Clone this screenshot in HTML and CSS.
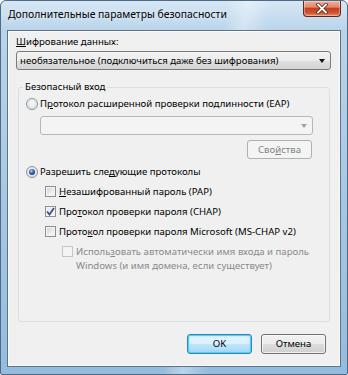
FILE: index.html
```html
<!DOCTYPE html>
<html lang="ru">
<head>
<meta charset="utf-8">
<link rel="stylesheet" href="styles.css">
</head>
<body>
<div class="window">
  <div class="titlebar">
    <div class="title">Дополнительные параметры безопасности</div>
    <div class="close">
      <svg width="14" height="11" viewBox="0 0 14 11"><path d="M3 1.5 L11 9.5 M11 1.5 L3 9.5" stroke="#5a2418" stroke-width="3.4" stroke-linecap="square"/><path d="M3 1.5 L11 9.5 M11 1.5 L3 9.5" stroke="#ffffff" stroke-width="1.8" stroke-linecap="square"/></svg>
    </div>
  </div>
  <div class="client">
    <div class="label"><u>Ш</u>ифрование данных:</div>
    <div class="combo">
      <span>необязательное (подключиться даже без шифрования)</span>
      <span class="arrow"></span>
    </div>
    <fieldset class="group">
      <legend>Безопасный вход</legend>
      <div class="row"><span class="radio"></span><span>П<u>р</u>отокол расширенной проверки подлинности (EAP)</span></div>
      <div class="combo disabled indent"><span></span><span class="arrow"></span></div>
      <div class="propsrow"><div class="btn disabled">Сво<u>й</u>ства</div></div>
      <div class="row gap"><span class="radio checked"></span><span>Разрешить сле<u>д</u>ующие протоколы</span></div>
      <div class="row sub"><span class="check"></span><span><u>Н</u>езашифрованный пароль (PAP)</span></div>
      <div class="row sub"><span class="check checked"><svg width="9" height="9" viewBox="0 0 9 9"><path d="M1 4.5 L3.5 7.5 L8 1" fill="none" stroke="#3b4f91" stroke-width="1.8"/></svg></span><span>Про<u>т</u>окол проверки пароля (CHAP)</span></div>
      <div class="row sub"><span class="check"></span><span>Прото<u>к</u>ол проверки пароля Microsoft (MS-CHAP v2)</span></div>
      <div class="row subsub dis"><span class="check disabled"></span><span>Исполь<u>з</u>овать автоматически имя входа и пароль<br>Windows (и имя домена, если существует)</span></div>
    </fieldset>
    <div class="buttons">
      <div class="btn default">OK</div>
      <div class="btn">Отмена</div>
    </div>
  </div>
</div>
</body>
</html>
```
FILE: styles.css
```css
* { box-sizing: border-box; }
html, body { margin: 0; padding: 0; }
body {
  width: 348px; height: 375px; overflow: hidden;
  font-family: "Noto Sans", "Open Sans", sans-serif;
  font-size: 9.6px; line-height: 14px; color: #000;
  background: #fff;
  white-space: nowrap;
}
.window {
  width: 348px; height: 375px;
  display: flex; flex-direction: column;
  padding: 0 6px 7px 6px;
  border: 1px solid #4d6b85;
  border-radius: 6px 6px 2px 2px;
  background:
    linear-gradient(100deg, rgba(255,255,255,0) 0%, rgba(255,255,255,0) 55%, rgba(255,255,255,0.35) 60%, rgba(255,255,255,0) 66%, rgba(255,255,255,0) 100%),
    linear-gradient(180deg, #d6e7f5 0%, #b9d4ea 8%, #a4c6e3 60%, #94bcdf 100%);
}
.titlebar {
  height: 29px; flex: none;
  display: flex; align-items: flex-start;
}
.title {
  margin: 5px 0 0 1px;
  font-size: 10.4px; line-height: 16px; color: #000;
  text-shadow: 0 0 6px rgba(255,255,255,0.9);
}
.close {
  margin-left: auto; margin-right: 0;
  width: 38px; height: 16px;
  border: 1px solid #5b2a1e; border-top: none;
  border-radius: 0 0 4px 4px;
  background: linear-gradient(180deg, #eeb19c 0%, #df8a6c 40%, #c93f24 50%, #cc4f2c 75%, #e88a62 100%);
  display: flex; align-items: center; justify-content: center;
  box-shadow: inset 0 0 0 1px rgba(255,255,255,0.35);
}
.close svg { display: block; }
.client {
  flex: 1; min-height: 0; overflow: hidden;
  background: #f0f0f0;
  border: 1px solid #5f7384;
  box-shadow: inset 0 0 0 1px #fbfbfb;
  padding: 4px 9px 0 8px;
  display: flex; flex-direction: column;
}
.label { height: 14px; }
u { text-decoration: underline; text-underline-offset: 1px; }
.combo {
  flex: none;
  margin-top: 2px; height: 19px;
  border: 1px solid #7a7a7a; border-radius: 3px;
  background: linear-gradient(180deg, #f3f3f3 0%, #ececec 50%, #e0e0e0 51%, #d4d4d4 100%);
  display: flex; align-items: center; justify-content: space-between;
  padding: 0 5px 0 3px;
}
.arrow {
  width: 0; height: 0;
  border-left: 3.5px solid transparent; border-right: 3.5px solid transparent;
  border-top: 4px solid #111;
}
.combo.disabled {
  background: #f4f4f4; border-color: #b4b8bb;
}
.combo.disabled .arrow { border-top-color: #a3a3a3; }
.group {
  flex: none;
  margin: 10px 1px 0 2px; min-width: 0;
  border: 1px solid #d5dfe5; border-radius: 3px;
  padding: 3px 16px 48px 7px;
}
.group legend {
  padding: 0 2px; margin-left: -3px;
  line-height: 14px;
}
.row {
  display: flex; align-items: flex-start; min-height: 14px;
}
.row.gap { margin-top: 6px; }
.row.sub { margin-top: 6px; margin-left: 19px; }
.row.subsub { margin-top: 6px; margin-left: 36px; color: #8a8a8a; }
.radio {
  flex: none;
  width: 12px; height: 12px; margin: 1px 2px 0 0;
  border-radius: 50%;
  border: 1px solid #8e9399;
  background: radial-gradient(circle at 50% 40%, #fafafa 0%, #e4e6e8 60%, #d2d6da 100%);
  display: flex; align-items: center; justify-content: center;
}
.radio.checked::after {
  content: ""; width: 6px; height: 6px; border-radius: 50%;
  background: radial-gradient(circle at 40% 35%, #b9d4f0 0%, #2c5dae 45%, #14305e 100%);
}
.check {
  flex: none;
  width: 11px; height: 11px; margin: 1px 3px 0 0;
  border: 1px solid #8e8f8f;
  background: linear-gradient(135deg, #d0d3d8 0%, #eceef0 60%, #f8f8f8 100%);
  box-shadow: inset 0 0 0 1px #f4f4f4;
  display: flex; align-items: center; justify-content: center;
}
.check.checked { background: linear-gradient(135deg, #e6e8ec 0%, #f7f7f7 100%); }
.check svg { display: block; }
.check.disabled { border-color: #c5c5c5; background: #f4f4f4; box-shadow: none; }
.indent { margin-top: 5px; margin-left: 14px; }
.propsrow { display: flex; justify-content: flex-end; margin-top: 5px; }
.btn {
  flex: none;
  height: 19px; width: 65px;
  border: 1px solid #707070; border-radius: 3px;
  background: linear-gradient(180deg, #f2f2f2 0%, #ebebeb 50%, #dddddd 51%, #cfcfcf 100%);
  box-shadow: inset 0 0 0 1px rgba(255,255,255,0.7);
  display: flex; align-items: center; justify-content: center;
}
.btn.disabled {
  background: #f4f4f4; border-color: #adb2b5; color: #838383; box-shadow: none;
  margin-right: 1px;
}
.buttons {
  display: flex; justify-content: flex-end; gap: 9px;
  margin-top: 12px; margin-right: 5px;
}
.buttons .btn { height: 20px; }
.btn.default {
  border-color: #3c7fb1;
  background: linear-gradient(180deg, #eaf6fd 0%, #d9f0fc 50%, #bee6fd 51%, #a7d9f5 100%);
  box-shadow: inset 0 0 0 1px #48d2f6, inset 0 0 3px 1px rgba(120,210,250,0.6);
}
```
